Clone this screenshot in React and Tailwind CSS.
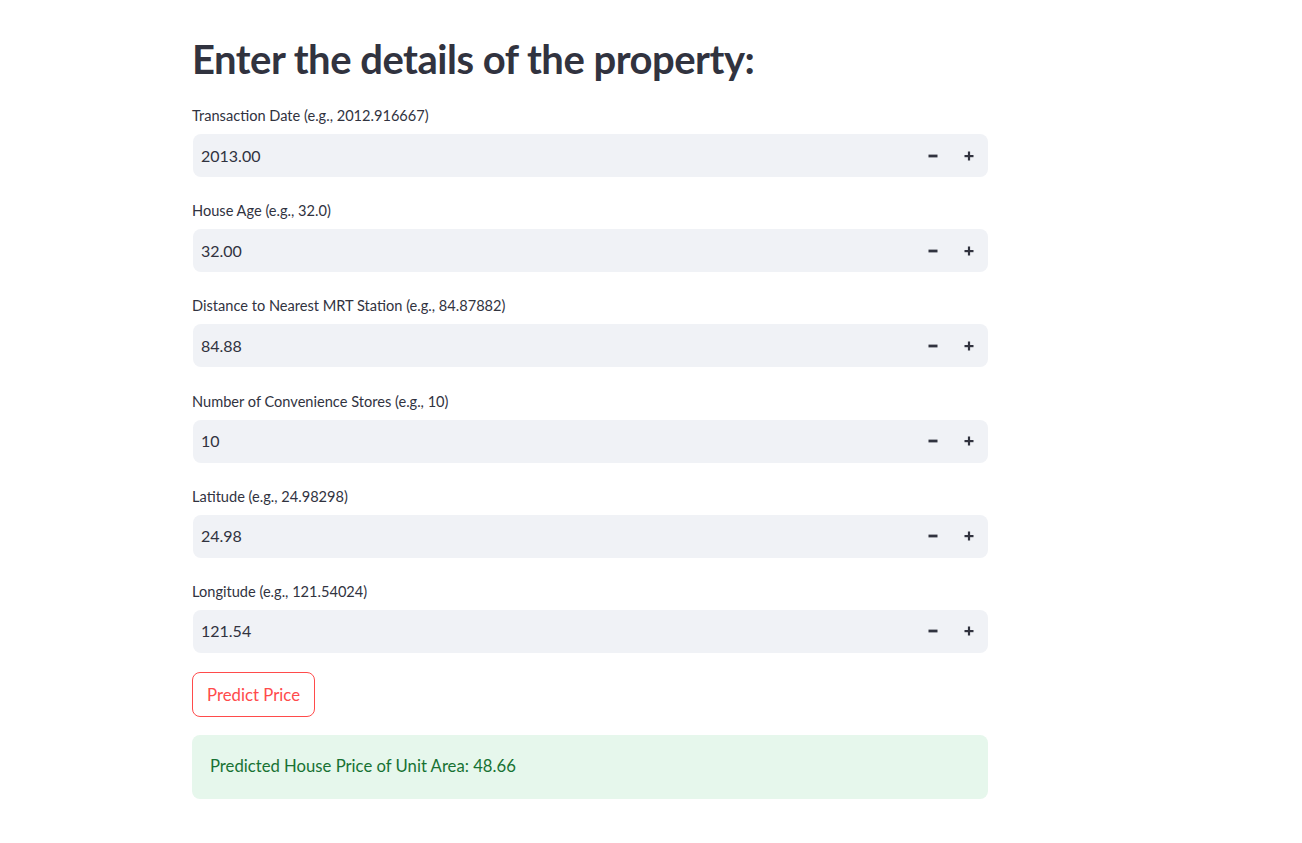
import React, { useState } from "react";

const fields = [
  { label: "Transaction Date (e.g., 2012.916667)", value: "2013.00" },
  { label: "House Age (e.g., 32.0)", value: "32.00" },
  { label: "Distance to Nearest MRT Station (e.g., 84.87882)", value: "84.88" },
  { label: "Number of Convenience Stores (e.g., 10)", value: "10" },
  { label: "Latitude (e.g., 24.98298)", value: "24.98" },
  { label: "Longitude (e.g., 121.54024)", value: "121.54" },
];

function NumberInput({ label, value }) {
  const [v, setV] = useState(value);
  return (
    <div className="flex flex-col">
      <label className="text-[14.6px] text-[#31333f] h-[21px] leading-[21px] mb-[8px]">{label}</label>
      <div className="flex items-center h-[43px] w-[795px] ml-[1px] rounded-[8px] bg-[#f0f2f6]">
        <input
          value={v}
          onChange={(e) => setV(e.target.value)}
          className="flex-1 bg-transparent outline-none pl-[8px] text-[16px] text-[#31333f]"
        />
        <button className="w-[36px] h-full flex items-center justify-center">
          <svg width="10" height="10" viewBox="0 0 10 10">
            <rect x="0.5" y="3.6" width="9" height="2.8" fill="#31333f" />
          </svg>
        </button>
        <button className="w-[36px] h-full flex items-center justify-center mr-[1px]">
          <svg width="10" height="10" viewBox="0 0 10 10">
            <rect x="0.5" y="4" width="9" height="2.2" fill="#31333f" />
            <rect x="3.9" y="0.5" width="2.2" height="9" fill="#31333f" />
          </svg>
        </button>
      </div>
    </div>
  );
}

export default function App() {
  return (
    <div className="min-h-screen bg-white font-['Lato',sans-serif] text-[#31333f]">
      <div className="pl-[192px] pt-[33px] w-[988px]">
        <h1 className="text-[40px] font-bold leading-[52px] tracking-[-0.5px] mb-[20px]">
          Enter the details of the property:
        </h1>
        <div className="flex flex-col gap-[23.2px]">
          {fields.map((f) => (
            <NumberInput key={f.label} label={f.label} value={f.value} />
          ))}
        </div>
        <button className="mt-[19px] h-[45px] px-[14px] rounded-[8px] border border-[#ff4b4b] text-[#ff4b4b] text-[16.8px] bg-white">
          Predict Price
        </button>
        <div className="mt-[18px] h-[64px] rounded-[8px] bg-[#e6f7ec] text-[#177233] text-[16.7px] flex items-center px-[18px]">
          Predicted House Price of Unit Area: 48.66
        </div>
      </div>
    </div>
  );
}
